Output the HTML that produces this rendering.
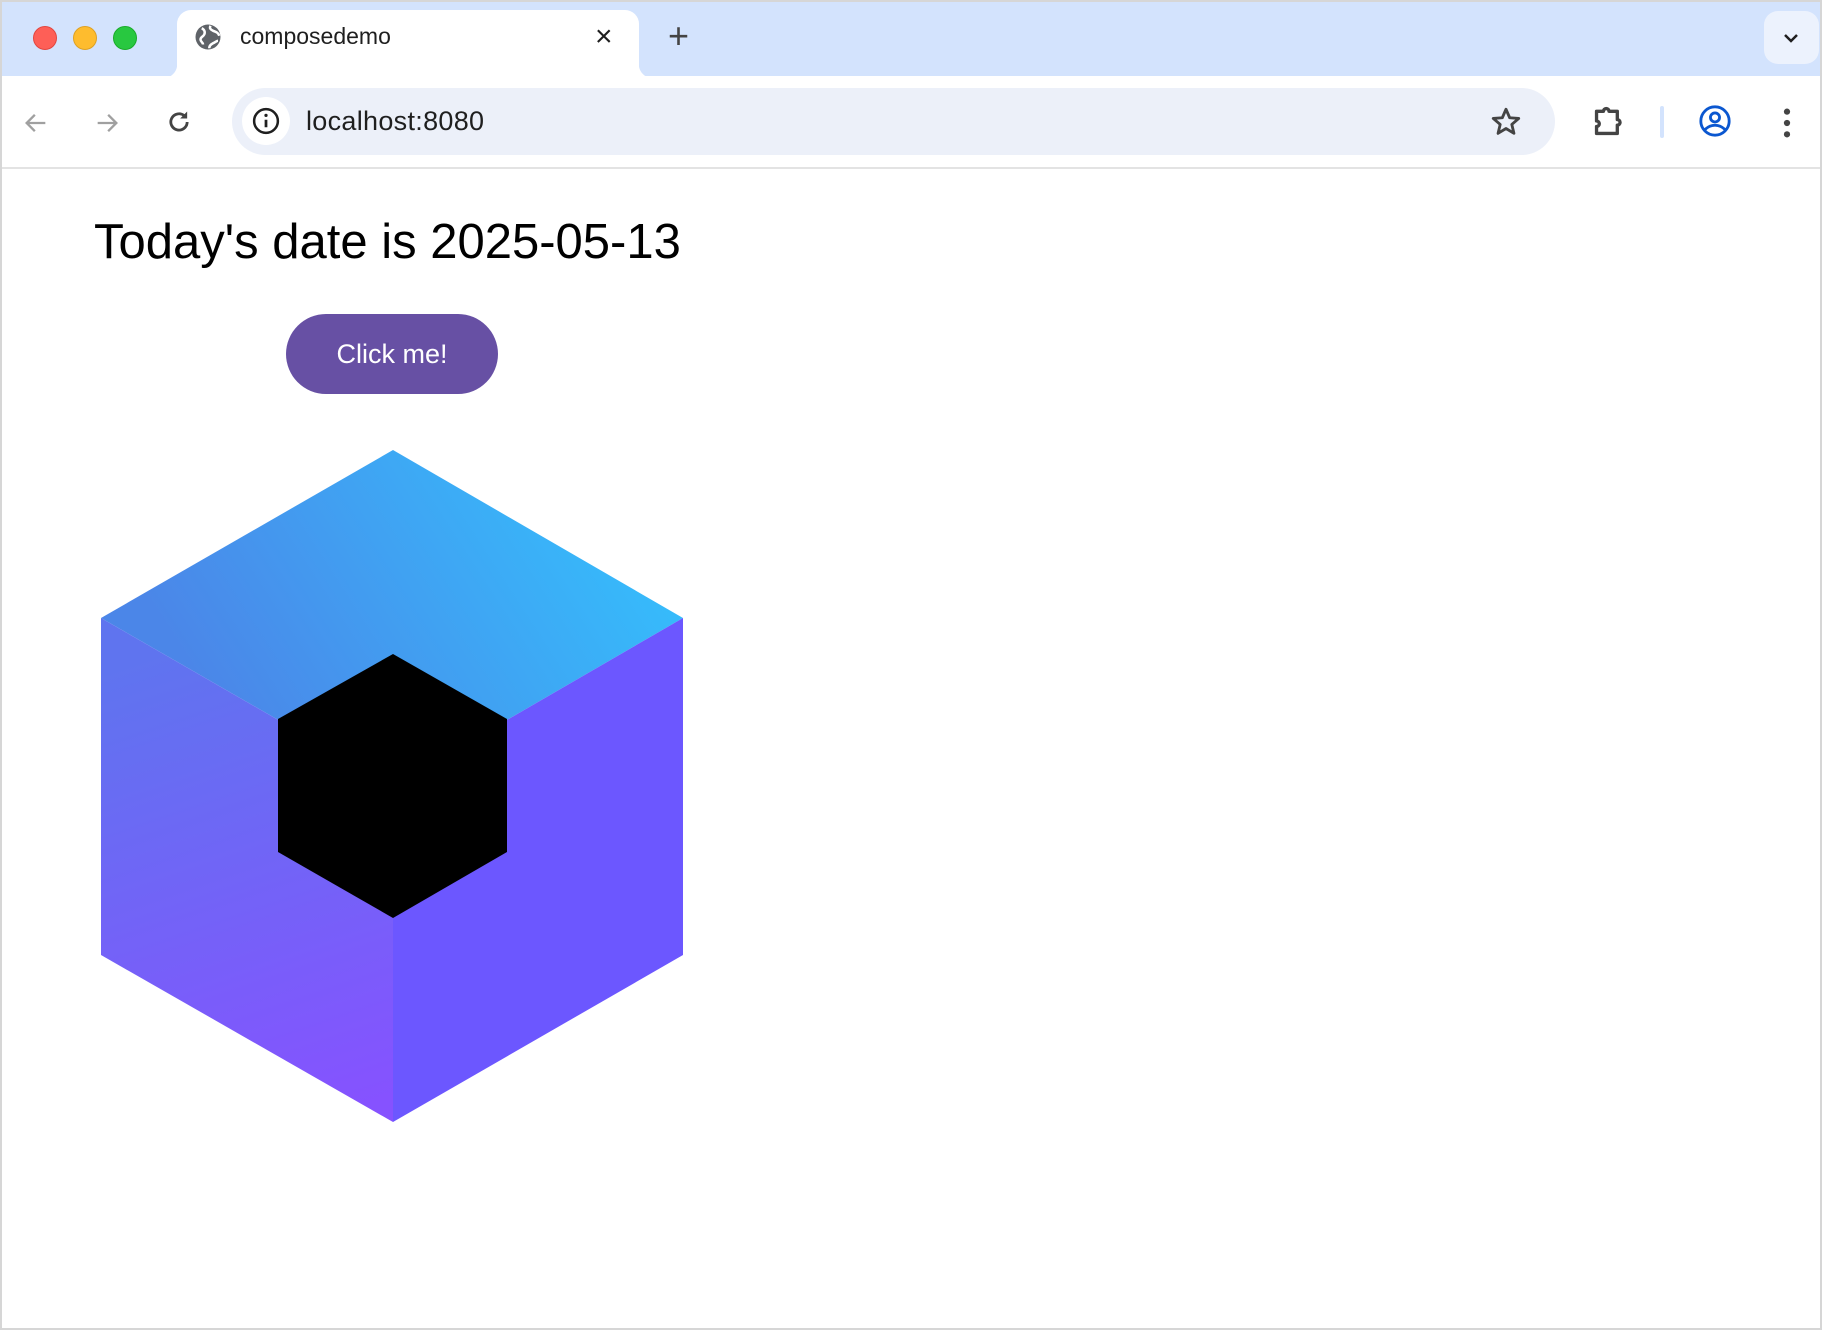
<!DOCTYPE html>
<html><head><style>
*{margin:0;padding:0;box-sizing:border-box}
body{width:1822px;height:1330px;background:#fff;position:relative;overflow:hidden;font-family:"Liberation Sans",sans-serif}
.frame{position:absolute;inset:0;border:2px solid #d6d6d6;border-radius:0}
.tabbar{position:absolute;left:0;top:0;width:1822px;height:76px;background:#d3e3fd;border-top:2px solid #d6d6d6}
.dot{position:absolute;top:24px;width:24px;height:24px;border-radius:50%}
.tab{position:absolute;left:177px;top:8px;width:462px;height:68px;background:#fff;border-radius:14px 14px 0 0}
.tab:before{content:"";position:absolute;left:-14px;bottom:0;width:14px;height:14px;background:radial-gradient(circle at 0 0,#d3e3fd 14px,#fff 14.5px)}
.tab:after{content:"";position:absolute;right:-14px;bottom:0;width:14px;height:14px;background:radial-gradient(circle at 100% 0,#d3e3fd 14px,#fff 14.5px)}
.toolbar{position:absolute;left:0;top:76px;width:1822px;height:93px;background:#fff;border-bottom:2px solid #e3e3e3}
.omni{position:absolute;left:232px;top:12px;width:1323px;height:67px;background:#ecf0f9;border-radius:34px}
.icon{position:absolute}
</style></head><body>
<div class="tabbar">
 <div class="dot" style="left:33px;background:#fe5f57;border:1px solid #e2463f"></div>
 <div class="dot" style="left:73px;background:#febc2e;border:1px solid #dea123"></div>
 <div class="dot" style="left:113px;background:#28c840;border:1px solid #1aab29"></div>
 <div class="tab">
  <svg class="icon" style="left:16px;top:12px" width="30" height="30" viewBox="0 0 24 24"><circle cx="12" cy="12" r="10" fill="#5f6368"/><path d="M7 5c2 1 3 3 2 5s-3 2-3 4 2 2 2 4M14 3c-1 2 0 3 2 4s4 1 5 4M13 21c0-2 1-3 3-4s3-2 4-2" stroke="#fff" stroke-width="2" fill="none"/></svg>
  <div style="position:absolute;left:63px;top:13px;font-size:23px;color:#1f1f1f">composedemo</div>
  <div style="position:absolute;left:418px;top:10px;font-size:30px;color:#1f1f1f">×</div>
 </div>
 <div style="position:absolute;left:668px;top:13px;font-size:36px;color:#444">+</div>
 <div style="position:absolute;left:1764px;top:9px;width:55px;height:53px;background:#ecf2fd;border-radius:14px">
  <svg class="icon" style="left:17px;top:17px" width="20" height="20" viewBox="0 0 20 20"><path d="M4 7l6 6 6-6" stroke="#1f1f1f" stroke-width="2.5" fill="none"/></svg>
 </div>
</div>
<div class="toolbar">
 <svg class="icon" style="left:22px;top:33px" width="28" height="28" viewBox="0 0 24 24"><path d="M20 12H5M11 5l-7 7 7 7" stroke="#a0a0a0" stroke-width="2" fill="none"/></svg>
 <svg class="icon" style="left:93px;top:33px" width="28" height="28" viewBox="0 0 24 24"><path d="M4 12h15M13 5l7 7-7 7" stroke="#a0a0a0" stroke-width="2" fill="none"/></svg>
 <svg class="icon" style="left:165px;top:32px" width="28" height="28" viewBox="0 0 24 24"><path d="M19 12a7 7 0 1 1-2.5-5.4" stroke="#444" stroke-width="2.4" fill="none"/><path d="M19 3v6h-6z" fill="#444"/></svg>
 <div class="omni">
  <div style="position:absolute;left:10px;top:9px;width:48px;height:48px;border-radius:50%;background:#fff"></div>
  <svg class="icon" style="left:19px;top:18px" width="30" height="30" viewBox="0 0 24 24"><circle cx="12" cy="12" r="9.5" stroke="#1f1f1f" stroke-width="2" fill="none"/><path d="M12 11v6" stroke="#1f1f1f" stroke-width="2.2"/><circle cx="12" cy="7.5" r="1.3" fill="#1f1f1f"/></svg>
  <div style="position:absolute;left:74px;top:18px;font-size:27px;color:#1f1f1f;letter-spacing:.3px">localhost:8080</div>
  <svg class="icon" style="left:1257px;top:17px" width="34" height="34" viewBox="0 0 24 24"><path d="M12 3l2.6 6 6.4.5-4.9 4.2 1.5 6.3L12 16.6 6.4 20l1.5-6.3L3 9.5 9.4 9z" stroke="#444" stroke-width="2" fill="none" stroke-linejoin="round"/></svg>
 </div>
 <svg class="icon" style="left:1592px;top:27px" width="34" height="36" viewBox="0 0 24 26"><path d="M3 6h5a2 2 0 0 1 4 0h6v6a2 2 0 0 1 0 4v6H3v-5a2 2 0 0 0 0-4z" stroke="#444" stroke-width="2.4" fill="none" stroke-linejoin="round"/></svg>
 <div style="position:absolute;left:1660px;top:30px;width:4px;height:32px;background:#d3e3fd;border-radius:2px"></div>
 <svg class="icon" style="left:1698px;top:28px" width="34" height="34" viewBox="0 0 24 24"><circle cx="12" cy="12" r="10" stroke="#0b57d0" stroke-width="2" fill="none"/><circle cx="12" cy="9.5" r="3.2" stroke="#0b57d0" stroke-width="2" fill="none"/><path d="M5 18c4-4 10-4 14 0" stroke="#0b57d0" stroke-width="2" fill="none"/></svg>
 <svg class="icon" style="left:1778px;top:30px" width="18" height="34" viewBox="0 0 6 24"><circle cx="3" cy="4" r="2.2" fill="#444"/><circle cx="3" cy="12" r="2.2" fill="#444"/><circle cx="3" cy="20" r="2.2" fill="#444"/></svg>
</div>
<div style="position:absolute;left:94px;top:214px;font-size:49px;color:#000;letter-spacing:0px">Today's date is 2025-05-13</div>
<div style="position:absolute;left:286px;top:314px;width:212px;height:80px;border-radius:40px;background:#6750a4;color:#fff;font-size:27px;line-height:80px;text-align:center">Click me!</div>
<svg style="position:absolute;left:0;top:0" width="1822" height="1330">
 <defs>
  <linearGradient id="t" x1="620" y1="520" x2="250" y2="760" gradientUnits="userSpaceOnUse"><stop offset="0" stop-color="#36bbfb"/><stop offset="1" stop-color="#4b86e8"/></linearGradient>
  <linearGradient id="l" x1="200" y1="640" x2="360" y2="1110" gradientUnits="userSpaceOnUse"><stop offset="0" stop-color="#5f74ef"/><stop offset="1" stop-color="#8652ff"/></linearGradient>
 </defs>
 <polygon points="393,450 683,618 393,786 101,618" fill="url(#t)"/>
 <polygon points="101,618 393,786 393,1122 101,955" fill="url(#l)"/>
 <polygon points="683,618 393,786 393,1122 683,955" fill="#6c57ff"/>
 <polygon points="393,654 507,719 507,852 393,918 278,852 278,719" fill="#000"/>
</svg>
<div class="frame"></div>
</body></html>
